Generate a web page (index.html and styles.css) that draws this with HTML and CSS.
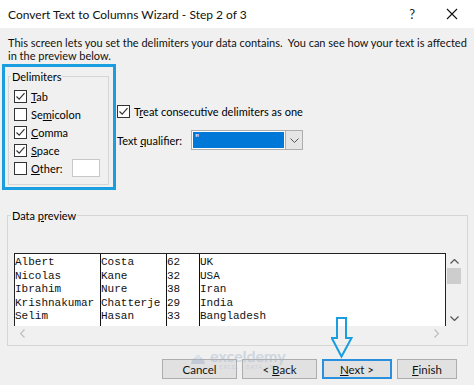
FILE: index.html
```html
<!DOCTYPE html>
<html lang="en">
<head>
    <meta charset="UTF-8">
    <title>Convert Text to Columns Wizard - Step 2 of 3</title>
    <link rel="stylesheet" href="styles.css">
</head>
<body>
    <div class="dialog">
        <div class="titlebar">
            <span class="title">Convert Text to Columns Wizard - Step 2 of 3</span>
            <span class="help">?</span>
            <svg class="close" width="12" height="12" viewBox="0 0 12 12">
                <path d="M1 1 L11 11 M11 1 L1 11" stroke="#111" stroke-width="1.1" fill="none"/>
            </svg>
        </div>

        <div class="content">
            <p class="intro">This screen lets you set the delimiters your data contains.&nbsp; You can see how your text is affected<br>in the preview below.</p>

            <div class="options">
                <!-- highlighted delimiters box -->
                <div class="highlight">
                    <fieldset class="group delimiters">
                        <legend>Delimiters</legend>
                        <div class="check">
                            <svg class="box" width="13" height="13" viewBox="0 0 13 13"><rect x="0.5" y="0.5" width="12" height="12" fill="#fff" stroke="#333"/><path d="M2.5 6.5 L5.2 9.2 L10.5 3.2" stroke="#333" stroke-width="1.2" fill="none"/></svg>
                            <span><u>T</u>ab</span>
                        </div>
                        <div class="check">
                            <svg class="box" width="13" height="13" viewBox="0 0 13 13"><rect x="0.5" y="0.5" width="12" height="12" fill="#fff" stroke="#333"/></svg>
                            <span>Se<u>m</u>icolon</span>
                        </div>
                        <div class="check">
                            <svg class="box" width="13" height="13" viewBox="0 0 13 13"><rect x="0.5" y="0.5" width="12" height="12" fill="#fff" stroke="#333"/><path d="M2.5 6.5 L5.2 9.2 L10.5 3.2" stroke="#333" stroke-width="1.2" fill="none"/></svg>
                            <span><u>C</u>omma</span>
                        </div>
                        <div class="check">
                            <svg class="box" width="13" height="13" viewBox="0 0 13 13"><rect x="0.5" y="0.5" width="12" height="12" fill="#fff" stroke="#333"/><path d="M2.5 6.5 L5.2 9.2 L10.5 3.2" stroke="#333" stroke-width="1.2" fill="none"/></svg>
                            <span><u>S</u>pace</span>
                        </div>
                        <div class="check">
                            <svg class="box" width="13" height="13" viewBox="0 0 13 13"><rect x="0.5" y="0.5" width="12" height="12" fill="#fff" stroke="#333"/></svg>
                            <span class="other-label"><u>O</u>ther:</span>
                            <span class="other-input"></span>
                        </div>
                    </fieldset>
                </div>

                <div class="side">
                    <div class="check">
                        <svg class="box" width="13" height="13" viewBox="0 0 13 13"><rect x="0.5" y="0.5" width="12" height="12" fill="#fff" stroke="#333"/><path d="M2.5 6.5 L5.2 9.2 L10.5 3.2" stroke="#333" stroke-width="1.2" fill="none"/></svg>
                        <span>T<u>r</u>eat consecutive delimiters as one</span>
                    </div>
                    <div class="qualifier">
                        <span class="qualifier-label">Text <u>q</u>ualifier:</span>
                        <div class="select">
                            <span class="select-value">"</span>
                            <span class="select-drop">
                                <svg width="9" height="5" viewBox="0 0 9 5"><path d="M0.5 0.5 L4.5 4.5 L8.5 0.5" stroke="#555" stroke-width="1" fill="none"/></svg>
                            </span>
                        </div>
                    </div>
                </div>
            </div>

            <!-- Data preview -->
            <fieldset class="group preview">
                <legend>Data <u>p</u>review</legend>
                <div class="preview-area">
                    <div class="grid">
                        <div class="col c1">Albert<br>Nicolas<br>Ibrahim<br>Krishnakumar<br>Selim</div>
                        <div class="col c2">Costa<br>Kane<br>Nure<br>Chatterje<br>Hasan</div>
                        <div class="col c3">62<br>32<br>38<br>29<br>33</div>
                        <div class="col c4">UK<br>USA<br>Iran<br>India<br>Bangladesh</div>
                    </div>
                    <div class="vscroll">
                        <svg width="9" height="5" viewBox="0 0 9 5"><path d="M0.5 4.5 L4.5 0.5 L8.5 4.5" stroke="#555" stroke-width="1.2" fill="none"/></svg>
                        <span class="thumb"></span>
                        <span class="spacer"></span>
                        <svg width="9" height="5" viewBox="0 0 9 5"><path d="M0.5 0.5 L4.5 4.5 L8.5 0.5" stroke="#555" stroke-width="1.2" fill="none"/></svg>
                    </div>
                    <div class="hscroll">
                        <svg width="5" height="9" viewBox="0 0 5 9"><path d="M4.5 0.5 L0.5 4.5 L4.5 8.5" stroke="#bbb" stroke-width="1.1" fill="none"/></svg>
                        <svg width="5" height="9" viewBox="0 0 5 9"><path d="M0.5 0.5 L4.5 4.5 L0.5 8.5" stroke="#bbb" stroke-width="1.1" fill="none"/></svg>
                    </div>
                </div>
            </fieldset>

            <div class="buttons">
                <button class="btn btn-cancel">Cancel</button>
                <button class="btn btn-back">&lt; <u>B</u>ack</button>
                <button class="btn btn-next"><u>N</u>ext &gt;</button>
                <button class="btn btn-finish"><u>F</u>inish</button>
            </div>
        </div>

        <!-- watermark over the buttons -->
        <div class="watermark">
            <svg class="wm-icon" width="16" height="16" viewBox="0 0 16 16"><path d="M1 13 A7 7 0 0 1 15 13 Z" fill="#9fb0c8"/><circle cx="8" cy="6" r="2.5" fill="#c8d2e0"/></svg>
            <div class="wm-text">
                <span class="wm-name">exceldemy</span>
                <span class="wm-sub">EXCEL · DATA · BI</span>
            </div>
        </div>

        <!-- pointer arrow -->
        <svg class="arrow" width="24" height="42" viewBox="0 0 24 42">
            <path d="M6 1 L15 1 L15 21 L20.5 21 L10.5 39.5 L0.8 21 L6 21 Z" stroke="#1a9ee0" stroke-width="2" fill="none" stroke-linejoin="miter"/>
        </svg>
    </div>
</body>
</html>
```

FILE: styles.css
```css
* {
    margin: 0;
    padding: 0;
    box-sizing: border-box;
}

body {
    width: 474px;
    height: 385px;
    overflow: hidden;
    background-color: #f0f0f0;
    font-family: 'Lato', 'Noto Sans', sans-serif;
    font-size: 11px;
    color: #000;
}

.dialog {
    position: relative;
    width: 474px;
    height: 385px;
}

.titlebar {
    height: 28px;
    background-color: #ffffff;
    display: flex;
    align-items: center;
    padding-left: 8px;
}

.title {
    font-size: 12px;
    color: #111;
    flex: 1;
}

.help {
    font-size: 13px;
    margin-right: 31px;
    color: #222;
}

.close {
    margin-right: 16px;
}

.intro {
    padding: 8px 0 0 8px;
    line-height: 13px;
    white-space: nowrap;
    color: #111;
}

.options {
    display: flex;
    padding-left: 2px;
    margin-top: 2px;
}

.highlight {
    width: 114px;
    height: 126px;
    border: 3px solid #1a9ee0;
    padding: 3px 0 0 3px;
}

.group {
    border: 1px solid #d6d6d6;
}

.group legend {
    margin-left: -3px;
    padding: 0 1px;
    line-height: 13px;
}

.delimiters {
    width: 101px;
    height: 115px;
    padding: 4px 0 0 5px;
}

.check {
    display: flex;
    align-items: center;
    height: 18px;
    gap: 4px;
    white-space: nowrap;
}

.box {
    flex: none;
}

.other-label {
    width: 37px;
}

.other-input {
    width: 28px;
    height: 18px;
    background: #fff;
    border: 1px solid #c8c8c8;
}

.side {
    padding: 38px 0 0 1px;
}

.qualifier {
    display: flex;
    align-items: center;
    margin-top: 10px;
    height: 20px;
}

.qualifier-label {
    width: 74px;
}

.select {
    display: flex;
    width: 112px;
    height: 20px;
    border: 1px solid #adadad;
    background: #fff;
}

.select-value {
    flex: 1;
    background: #0078d7;
    color: #fff;
    margin: 1px;
    line-height: 12px;
    padding-left: 2px;
}

.select-drop {
    width: 17px;
    background: #e5e5e5;
    border-left: 1px solid #adadad;
    display: flex;
    align-items: center;
    justify-content: center;
}

.preview {
    margin: 19px 0 0 7px;
    width: 461px;
    height: 137px;
    padding: 31px 0 0 6px;
}

.preview-area {
    display: grid;
    grid-template-columns: 432px 16px;
    grid-template-rows: 73px 15px;
}

.grid {
    display: flex;
    background: #fff;
    border-top: 1px solid #222;
    border-left: 1px solid #222;
    border-right: 1px solid #222;
    font-family: 'Liberation Mono', 'Courier New', monospace;
    font-size: 11px;
    line-height: 13.5px;
    color: #111;
    white-space: nowrap;
    overflow: hidden;
}

.col {
    padding-top: 2px;
}

.c1 {
    width: 85px;
}

.c2 {
    width: 66px;
    border-left: 1px solid #111;
}

.c3 {
    width: 33px;
    border-left: 1px solid #111;
}

.c4 {
    flex: 1;
    border-left: 1px solid #111;
}

.vscroll {
    display: flex;
    flex-direction: column;
    align-items: center;
    padding: 6px 0 5px;
}

.thumb {
    width: 14px;
    height: 16px;
    margin-top: 4px;
    background: #cdcdcd;
}

.spacer {
    flex: 1;
}

.hscroll {
    display: flex;
    justify-content: space-between;
    align-items: center;
    padding: 0 7px 0 6px;
}

.buttons {
    display: flex;
    justify-content: flex-end;
    gap: 5px;
    padding-right: 17px;
    margin-top: 13px;
}

.btn {
    height: 20px;
    background: #e1e1e1;
    border: 1px solid #adadad;
    font-family: 'Lato', 'Noto Sans', sans-serif;
    font-size: 11.5px;
    color: #111;
}

.btn-cancel,
.btn-back {
    width: 75px;
}

.btn-next {
    width: 70px;
    border: 2px solid #2a8fdc;
}

.btn-finish {
    width: 60px;
}

.watermark {
    position: absolute;
    left: 190px;
    top: 348px;
    display: flex;
    align-items: center;
    gap: 4px;
    opacity: 0.45;
}

.wm-text {
    display: flex;
    flex-direction: column;
    align-items: center;
}

.wm-name {
    font-size: 16px;
    font-weight: bold;
    color: #a9b7cc;
    line-height: 16px;
}

.wm-sub {
    font-size: 5px;
    letter-spacing: 1px;
    color: #a9b7cc;
}

.arrow {
    position: absolute;
    left: 331px;
    top: 317px;
}
```
